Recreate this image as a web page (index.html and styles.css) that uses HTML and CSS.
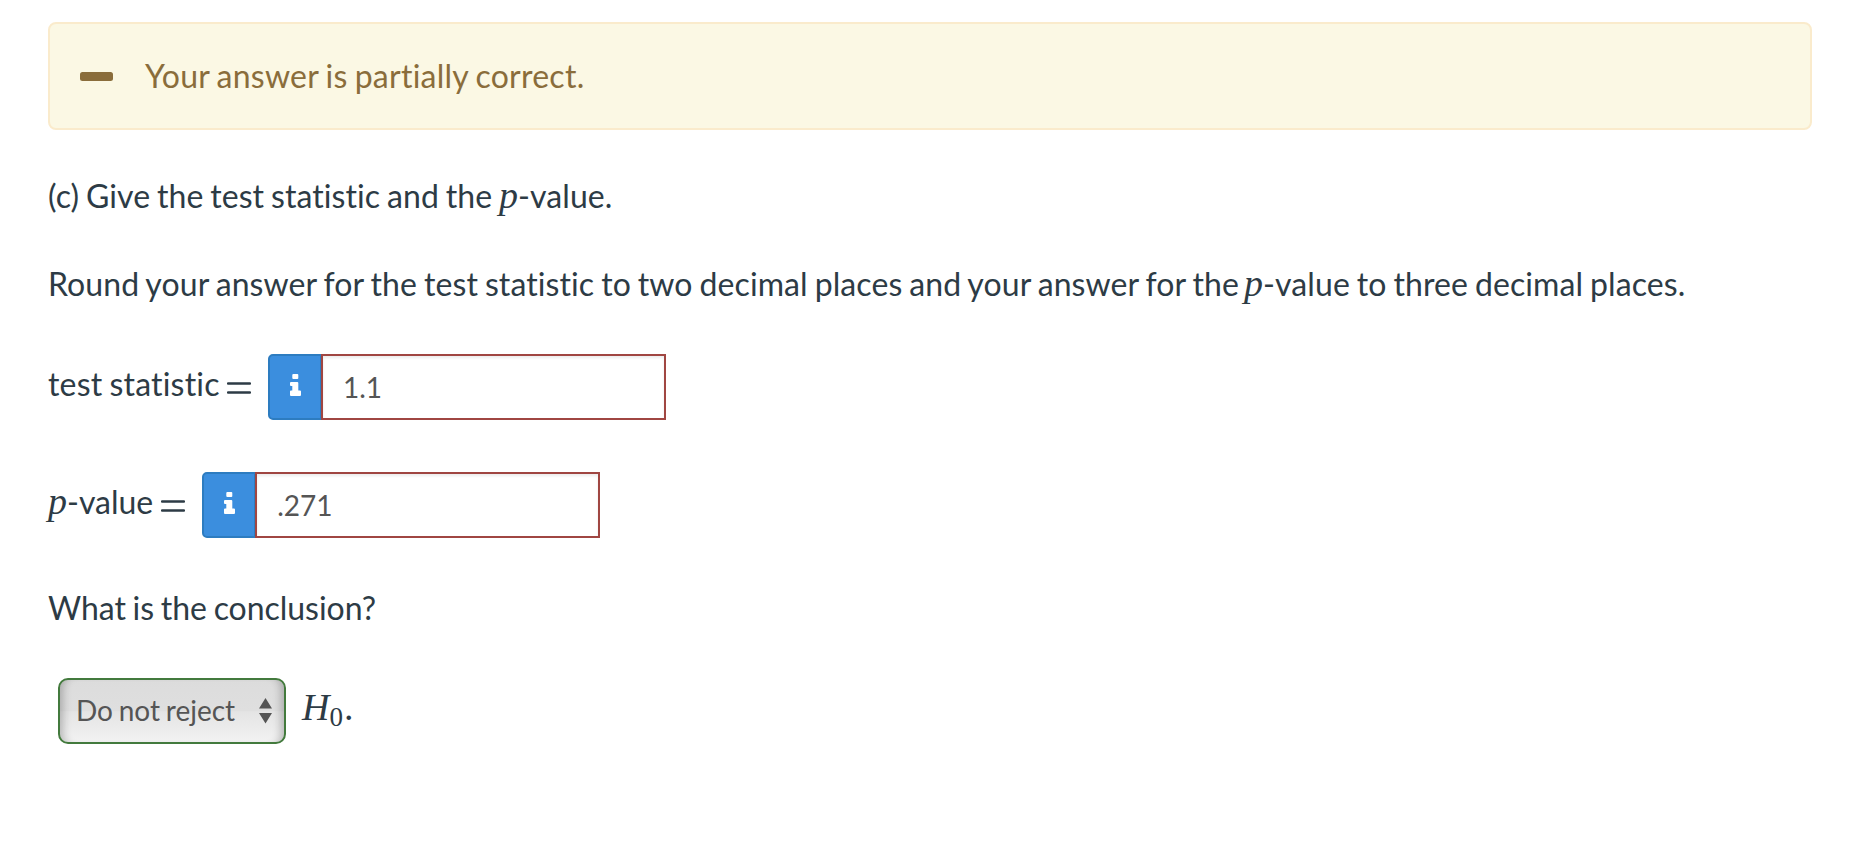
FILE: index.html
```html
<!DOCTYPE html>
<html lang="en">
<head>
    <meta charset="UTF-8">
    <title>Question Part C</title>
    <link rel="stylesheet" href="styles.css">
</head>
<body>
    <div class="alert">
        <svg class="alert-icon" width="33" height="9" viewBox="0 0 33 9"><rect width="33" height="9" rx="2.5" fill="currentColor"/></svg>
        <span class="alert-text">Your answer is partially correct.</span>
    </div>

    <p class="prompt">(c) Give the test statistic and the <i class="math">p</i>-value.</p>
    <p class="round">Round your answer for the test statistic to two decimal places and your answer for the <i class="math tight">p</i>-value to three decimal places.</p>

    <div class="row">
        <label class="wide" for="statistic">test statistic</label>
        <svg class="equals" width="24" height="12" viewBox="0 0 24 12"><path d="M1 1.5h22M1 10.5h22" stroke="currentColor" stroke-width="2.4" stroke-linecap="round"/></svg>
        <div class="input-group">
            <button class="info" aria-label="Information">
                <svg width="11" height="22" viewBox="0 0 11 22" fill="currentColor"><rect x="2.3" width="6" height="5" rx="1"/><path d="M1 8h6.3q1 0 1 1v7.6H10q1 0 1 1V21q0 1-1 1H1q-1 0-1-1v-3.4q0-1 1-1h1.3v-4.6H1q-1 0-1-1V9q0-1 1-1z"/></svg>
            </button>
            <input type="text" id="statistic" value="1.1">
        </div>
    </div>

    <div class="row">
        <label for="pvalue"><i class="math">p</i>-value</label>
        <svg class="equals" width="24" height="12" viewBox="0 0 24 12"><path d="M1 1.5h22M1 10.5h22" stroke="currentColor" stroke-width="2.4" stroke-linecap="round"/></svg>
        <div class="input-group">
            <button class="info" aria-label="Information">
                <svg width="11" height="22" viewBox="0 0 11 22" fill="currentColor"><rect x="2.3" width="6" height="5" rx="1"/><path d="M1 8h6.3q1 0 1 1v7.6H10q1 0 1 1V21q0 1-1 1H1q-1 0-1-1v-3.4q0-1 1-1h1.3v-4.6H1q-1 0-1-1V9q0-1 1-1z"/></svg>
            </button>
            <input type="text" id="pvalue" value=".271">
        </div>
    </div>

    <p class="question">What is the conclusion?</p>

    <div class="conclusion">
        <button class="select">
            <span>Do not reject</span>
            <svg width="13" height="26" viewBox="0 0 13 26" fill="currentColor"><path d="M6.5 0L13 10.5H0zM0 15h13L6.5 25.5z"/></svg>
        </button>
        <span class="hypothesis"><i>H</i><span class="sub">0</span><span class="dot">.</span></span>
    </div>
</body>
</html>
```
FILE: styles.css
```css
* { box-sizing: border-box; }
body { margin: 0; padding: 22px 46px 0 48px; background: #fff; color: #2d3b45; font: 32px/48px Lato, sans-serif; font-variant-ligatures: none; word-spacing: -1.4px; }
p { margin: 0; white-space: nowrap; }
.alert { display: flex; align-items: center; height: 108px; padding-left: 30px; border: 2px solid #faebcc; border-radius: 8px; background: #fbf8e4; color: #8a6d3b; }
.alert-text { margin-left: 32px; letter-spacing: 0.26px; }
.math { font-family: "Liberation Serif", serif; font-size: 38px; line-height: 0; }
.tight { margin-left: -2px; }
.prompt { margin-top: 42px; letter-spacing: 0.07px; }
.round { margin-top: 40px; margin-bottom: 46px; letter-spacing: 0.1px; }
.row { display: flex; height: 66px; margin-bottom: 52px; }
label { line-height: 48px; padding-top: 6px; }
.wide { width: 171px; letter-spacing: 0.2px; white-space: nowrap; }
.equals { margin: 28px 17px 0 8px; }
.input-group { display: flex; }
.info { display: flex; justify-content: center; width: 54px; height: 66px; padding: 18px 0 0; border: 2px solid #2d7cc0; border-radius: 5px 0 0 5px; background: #3b8ede; color: #fff; }
.info svg { display: block; }
input { width: 345px; height: 66px; margin-left: -1px; padding: 0 20px; border: 2px solid #a04642; box-shadow: inset 0 2px 3px rgba(0,0,0,0.08); color: #555; background: #fff; font: 28px Lato, sans-serif; }
.question { margin-top: -6px; letter-spacing: -0.04px; }
.conclusion { display: flex; margin-top: 46px; }
.select { display: flex; align-items: center; justify-content: space-between; width: 228px; height: 66px; margin-left: 10px; padding: 0 12px 1px 16px; border: 2px solid #437a3d; border-radius: 10px; background: linear-gradient(#dcdcdc 0%, #dfdfdf 50%, #e4e4e4 51%, #f2f2f2 100%); box-shadow: inset 10px 0 9px -7px rgba(0,0,0,0.24), inset -10px 0 9px -7px rgba(0,0,0,0.24); color: #555; font: 28px Lato, sans-serif; word-spacing: -1.4px; }
.select span { padding-bottom: 2px; }
.hypothesis { margin-left: 16px; padding-top: 3px; font-family: "Liberation Serif", serif; font-size: 38px; line-height: 52px; }
.sub { position: relative; top: 6px; font-size: 27px; line-height: 0; }
.dot { margin-left: 1px; }
```
